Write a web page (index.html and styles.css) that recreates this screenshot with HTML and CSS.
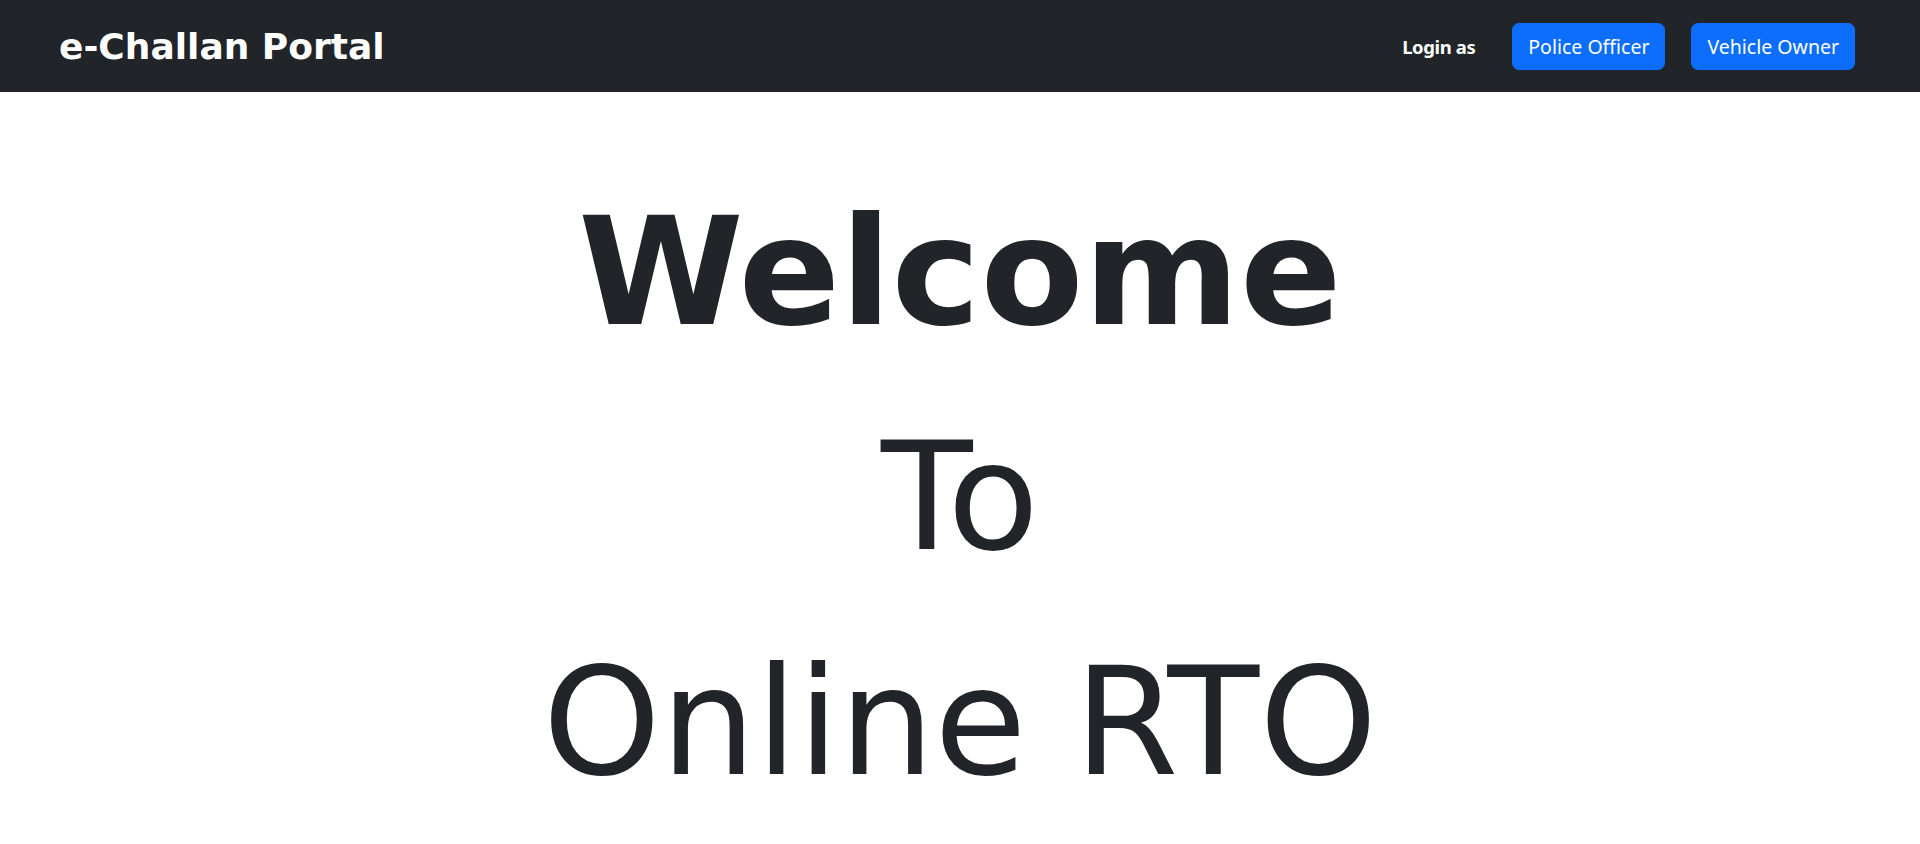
FILE: index.html
```html
<!DOCTYPE html>
<html lang="en">
<head>
<meta charset="utf-8">
<title>e-Challan Portal</title>
<link rel="stylesheet" href="styles.css">
</head>
<body>
<nav class="navbar">
  <a class="brand" href="#">e-Challan Portal</a>
  <div class="nav-right">
    <span class="login-label">Login as</span>
    <a class="btn" href="#">Police Officer</a>
    <a class="btn" href="#">Vehicle Owner</a>
  </div>
</nav>
<main class="hero">
  <div class="hero-line hero-bold">Welcome</div>
  <div class="hero-line">To</div>
  <div class="hero-line">Online RTO</div>
</main>
</body>
</html>
```

FILE: styles.css
```css
* { box-sizing: border-box; }
html, body { margin: 0; padding: 0; }
body {
  background: #ffffff;
  color: #212529;
  font-family: "DejaVu Sans", sans-serif;
}
.navbar {
  height: 92px;
  background: #212529;
  display: flex;
  align-items: center;
  justify-content: space-between;
  padding: 0 65px 0 59px;
}
.brand {
  font-family: "DejaVu Sans", sans-serif;
  font-weight: bold;
  font-size: 36px;
  color: #ffffff;
  text-decoration: none;
}
.nav-right {
  display: flex;
  align-items: center;
}
.login-label {
  font-family: "Noto Sans", "Open Sans", sans-serif;
  font-weight: bold;
  font-size: 18.5px;
  color: #ffffff;
  margin-right: 37px;
  letter-spacing: -0.4px;
}
.btn {
  display: inline-block;
  font-family: "Noto Sans", "Open Sans", sans-serif;
  font-size: 19.5px;
  line-height: 29px;
  padding: 8px 15px;
  border: 1px solid #0d6efd;
  background: #0d6efd;
  color: #ffffff;
  border-radius: 7px;
  text-decoration: none;
}
.btn + .btn { margin-left: 26px; }
.hero {
  padding-top: 68px;
  text-align: center;
}
.hero-line {
  font-family: "DejaVu Sans", sans-serif;
  font-size: 150px;
  line-height: 225px;
  font-weight: normal;
}
.hero-bold { font-weight: bold; }
```
